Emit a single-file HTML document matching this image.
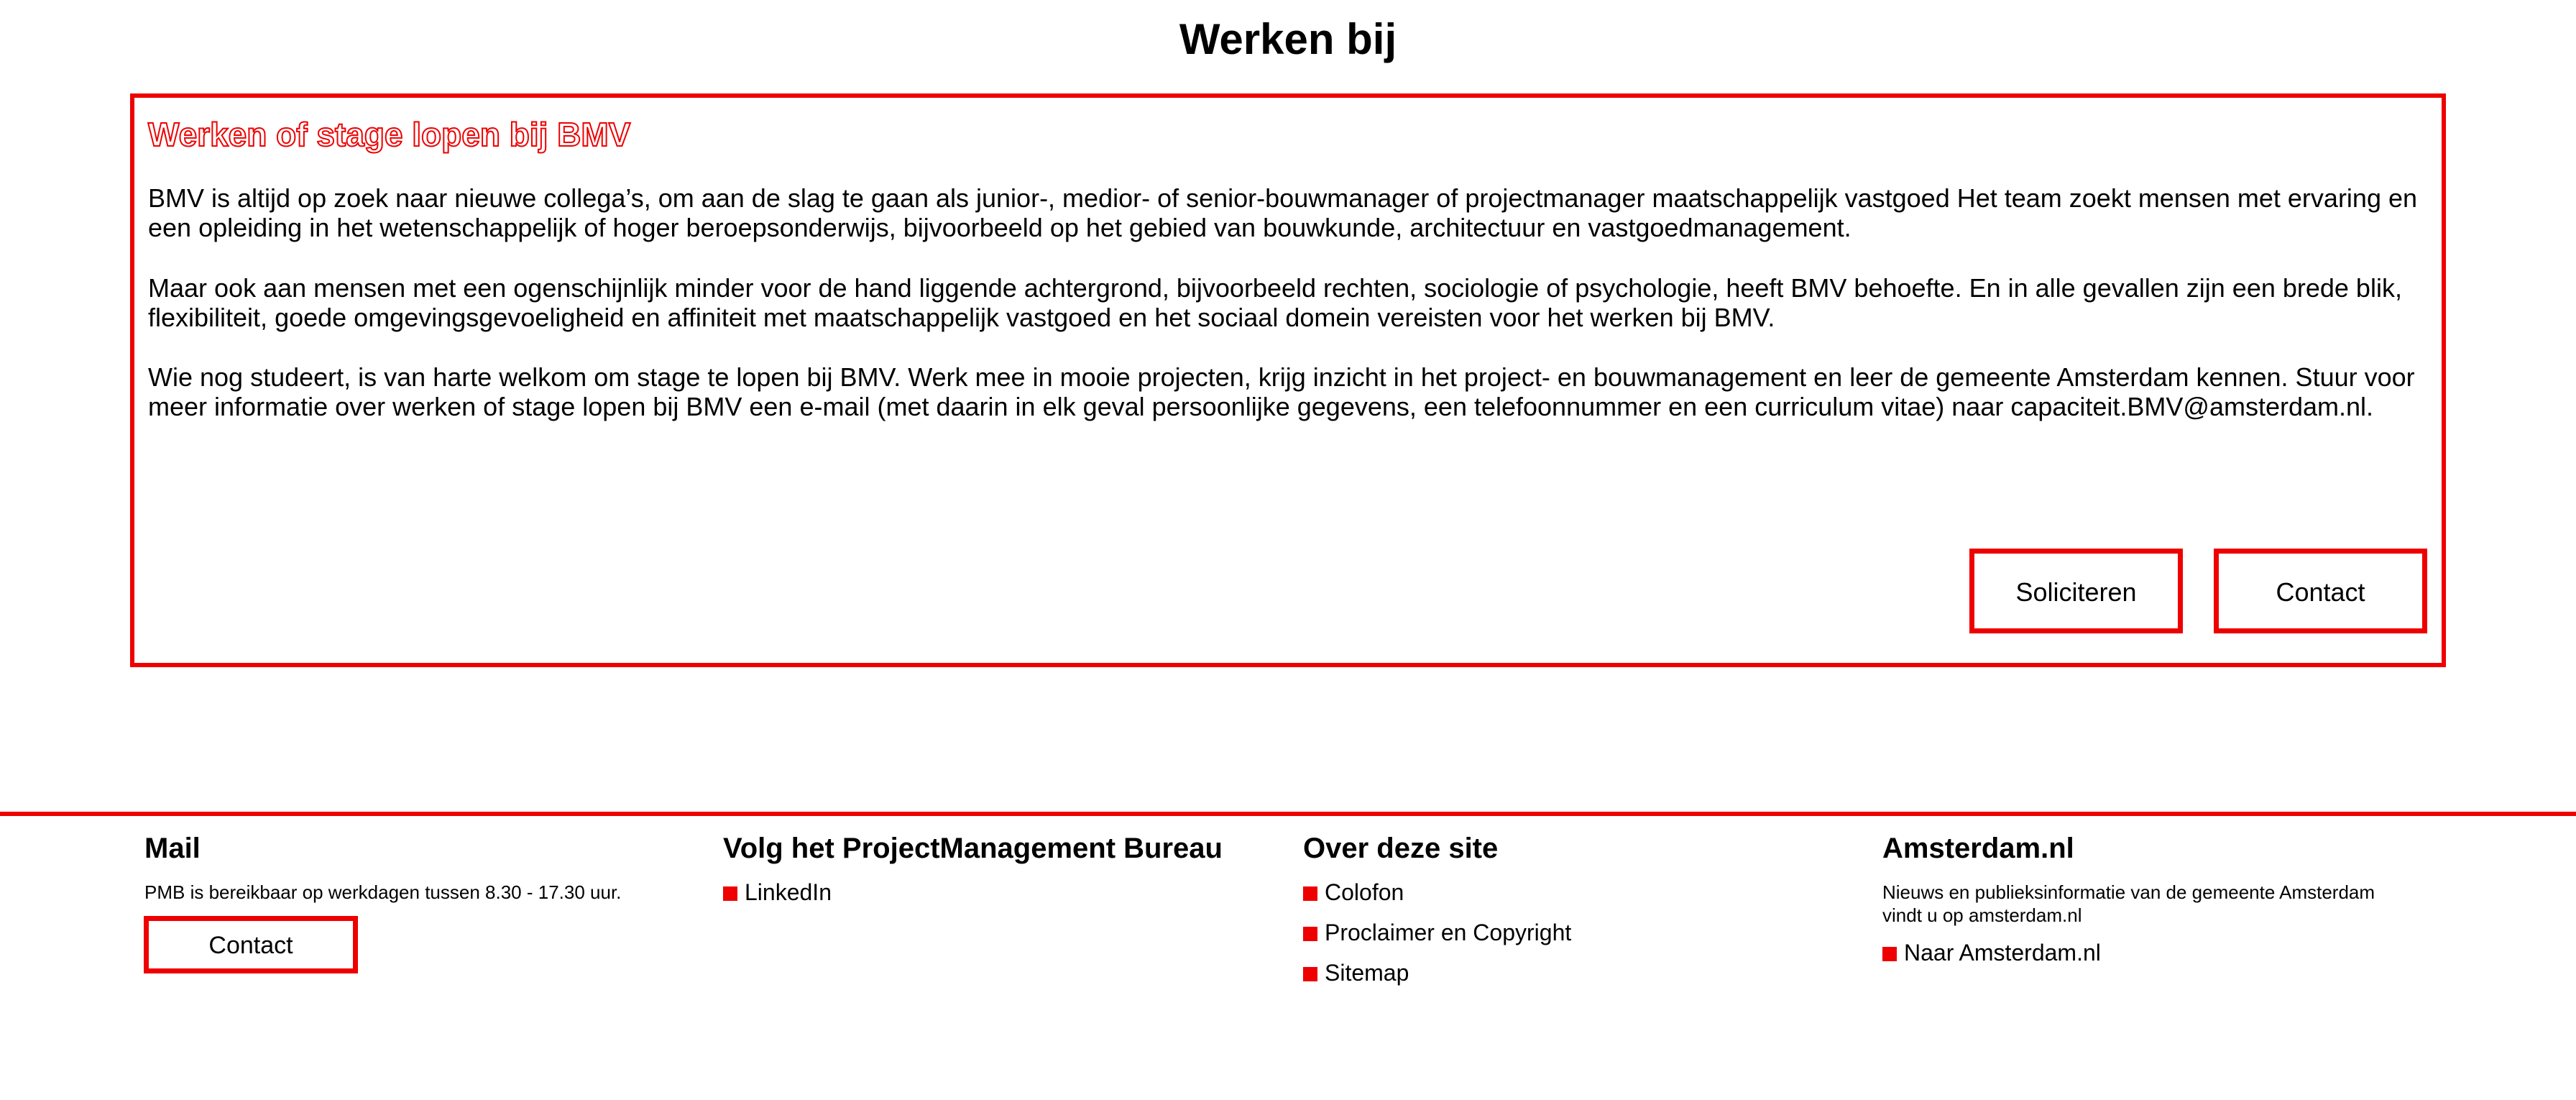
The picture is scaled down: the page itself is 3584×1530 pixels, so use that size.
<!DOCTYPE html>
<html><head><meta charset="utf-8"><style>
*{margin:0;padding:0;box-sizing:border-box}
body{width:3584px;height:1530px;background:#fff;font-family:"Liberation Sans",Arial,sans-serif;color:#000;position:relative;overflow:hidden}
.a{position:absolute;white-space:nowrap}
h1{position:absolute;left:0;width:3584px;text-align:center;top:20px;font-size:60px;font-weight:bold}
.box{position:absolute;left:181px;top:130px;width:3222px;height:798px;border:6px solid #e00}
.h2{left:206px;top:160px;font-size:46px;font-weight:bold;color:#fff;-webkit-text-stroke:2px #e00}
.p{left:206px;font-size:36px;line-height:41px;white-space:nowrap}
.btn{position:absolute;border:7px solid #e00;display:flex;align-items:center;justify-content:center;font-size:36px}
.line{position:absolute;left:0;top:1129px;width:3584px;height:6px;background:#e00}
.fh{font-size:40px;font-weight:bold;top:1158px}
.fs{font-size:26px;line-height:32px}
.li{font-size:32px;white-space:nowrap}
.li:before{content:"";display:inline-block;width:20px;height:20px;background:#e00;margin-right:10px;vertical-align:-1px}
</style></head><body>
<h1>Werken bij</h1>
<div class="box"></div>
<div class="a h2">Werken of stage lopen bij BMV</div>
<div class="a p" style="top:255px">BMV is altijd op zoek naar nieuwe collega’s, om aan de slag te gaan als junior-, medior- of senior-bouwmanager of projectmanager maatschappelijk vastgoed Het team zoekt mensen met ervaring en<br>een opleiding in het wetenschappelijk of hoger beroepsonderwijs, bijvoorbeeld op het gebied van bouwkunde, architectuur en vastgoedmanagement.</div>
<div class="a p" style="top:380px">Maar ook aan mensen met een ogenschijnlijk minder voor de hand liggende achtergrond, bijvoorbeeld rechten, sociologie of psychologie, heeft BMV behoefte. En in alle gevallen zijn een brede blik,<br>flexibiliteit, goede omgevingsgevoeligheid en affiniteit met maatschappelijk vastgoed en het sociaal domein vereisten voor het werken bij BMV.</div>
<div class="a p" style="top:504px">Wie nog studeert, is van harte welkom om stage te lopen bij BMV. Werk mee in mooie projecten, krijg inzicht in het project- en bouwmanagement en leer de gemeente Amsterdam kennen. Stuur voor<br>meer informatie over werken of stage lopen bij BMV een e-mail (met daarin in elk geval persoonlijke gegevens, een telefoonnummer en een curriculum vitae) naar capaciteit.BMV@amsterdam.nl.</div>
<div class="btn" style="left:2740px;top:763px;width:297px;height:118px;padding-top:4px">Soliciteren</div>
<div class="btn" style="left:3080px;top:763px;width:297px;height:118px;padding-top:4px">Contact</div>
<div class="line"></div>
<div class="a fh" style="left:201px">Mail</div>
<div class="a fs" style="left:201px;top:1225px">PMB is bereikbaar op werkdagen tussen 8.30 - 17.30 uur.</div>
<div class="btn" style="left:200px;top:1274px;width:298px;height:80px;font-size:34px;padding-top:3px">Contact</div>
<div class="a fh" style="left:1006px">Volg het ProjectManagement Bureau</div>
<div class="a li" style="left:1006px;top:1223px">LinkedIn</div>
<div class="a fh" style="left:1813px">Over deze site</div>
<div class="a li" style="left:1813px;top:1223px">Colofon</div>
<div class="a li" style="left:1813px;top:1279px">Proclaimer en Copyright</div>
<div class="a li" style="left:1813px;top:1335px">Sitemap</div>
<div class="a fh" style="left:2619px">Amsterdam.nl</div>
<div class="a fs" style="left:2619px;top:1225px">Nieuws en publieksinformatie van de gemeente Amsterdam<br>vindt u op amsterdam.nl</div>
<div class="a li" style="left:2619px;top:1307px">Naar Amsterdam.nl</div>
</body></html>
